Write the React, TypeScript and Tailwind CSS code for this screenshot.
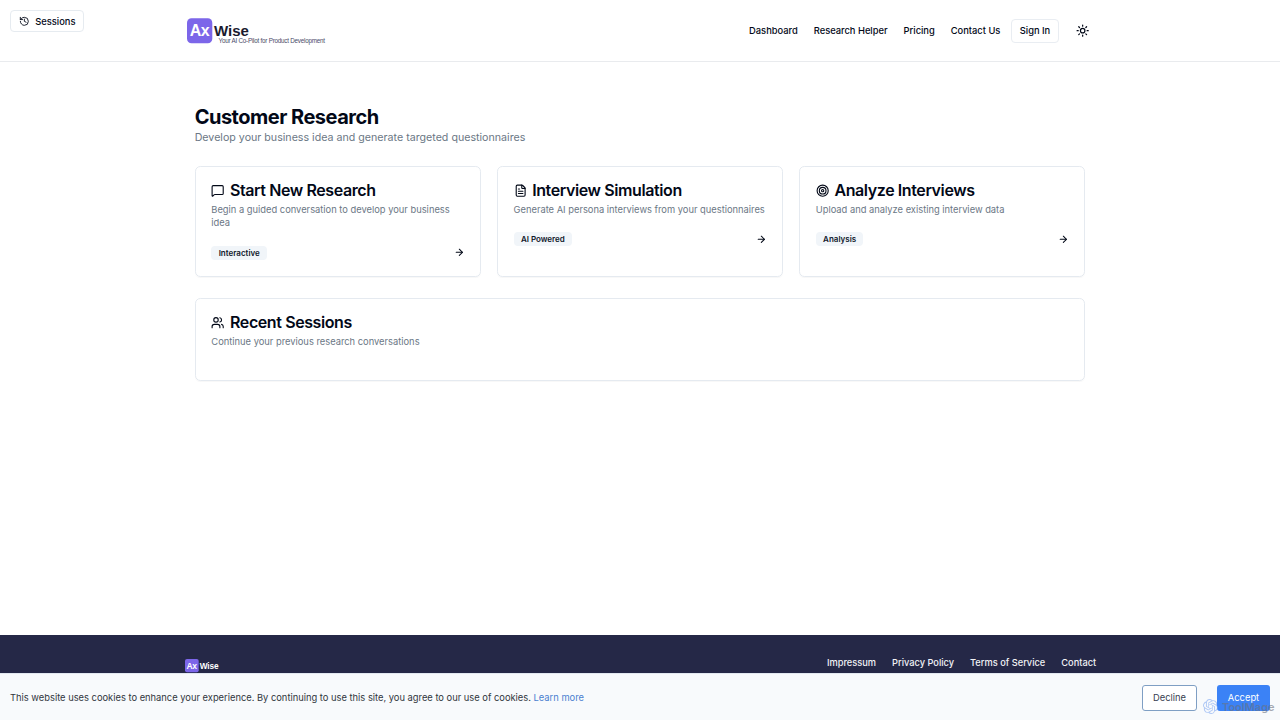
import React from 'react'
import {
  ArrowRight,
  FileText,
  History,
  MessageSquare,
  Sun,
  Target,
  Users,
  type LucideIcon,
} from 'lucide-react'
import { SiOpenai } from 'react-icons/si'

const navLinks = ['Dashboard', 'Research Helper', 'Pricing', 'Contact Us']
const footerLinks = ['Impressum', 'Privacy Policy', 'Terms of Service', 'Contact']

const actions = [
  {
    icon: MessageSquare,
    title: 'Start New Research',
    description: 'Begin a guided conversation to develop your business idea',
    badge: 'Interactive',
  },
  {
    icon: FileText,
    title: 'Interview Simulation',
    description: 'Generate AI persona interviews from your questionnaires',
    badge: 'AI Powered',
  },
  {
    icon: Target,
    title: 'Analyze Interviews',
    description: 'Upload and analyze existing interview data',
    badge: 'Analysis',
  },
]

const Logo: React.FC = () => (
  <svg width="142" height="30" viewBox="0 0 142 30" className="font-['Liberation_Sans',sans-serif]">
    <rect x="0" y="2.3" width="25.3" height="25" rx="4.5" fill="#7c66e9" />
    <text x="2.8" y="20" fontSize="16" fontWeight="700" fill="#fff" textLength="19.8">Ax</text>
    <text x="27" y="20" fontSize="15" fontWeight="700" fill="#1a1a2e" textLength="34.8">Wise</text>
    <text x="31.6" y="27.2" fontSize="6.3" fill="#4a4a68" textLength="106.4">
      Your AI Co-Pilot for Product Development
    </text>
  </svg>
)

const FooterLogo: React.FC = () => (
  <svg width="36" height="14" viewBox="0 0 36 14" className="font-['Liberation_Sans',sans-serif]">
    <rect x="0" y="0" width="13.7" height="13.3" rx="2" fill="#7c66e9" />
    <text x="1.5" y="9.5" fontSize="8.5" fontWeight="700" fill="#fff" textLength="10.5">Ax</text>
    <text x="14.7" y="9.5" fontSize="8.3" fontWeight="700" fill="#fff" textLength="19">Wise</text>
  </svg>
)

const Header: React.FC = () => (
  <header className="h-[62px] shrink-0 border-b border-[#e9ebee]">
    <div className="mx-auto flex h-[61px] w-[906.67px] items-center justify-between">
      <Logo />
      <div className="-mr-[3px] flex items-center">
        <nav className="flex gap-4">
          {navLinks.map((link) => (
            <a key={link} href="#" className="text-[9.333px] leading-[13.33px] font-medium">
              {link}
            </a>
          ))}
        </nav>
        <button className="ml-[10.67px] h-6 w-[48px] rounded-[4px] border border-[#e9edf2] text-[9.333px] font-medium">
          Sign In
        </button>
        <button className="ml-[10.67px] flex size-[26.67px] items-center justify-center">
          <Sun size={13.33} strokeWidth={2.2} />
        </button>
      </div>
    </div>
  </header>
)

interface CardHeadingProps {
  icon: LucideIcon
  title: string
  description: string
}

const CardHeading: React.FC<CardHeadingProps> = ({ icon: Icon, title, description }) => (
  <div>
    <h3 className="flex items-center gap-[5.33px] text-[16px] leading-4 font-semibold tracking-[-0.4px]">
      <Icon size={13.33} />
      {title}
    </h3>
    <p className="mt-[4.67px] text-[9.333px] leading-[13.33px] text-[#6b7785]">{description}</p>
  </div>
)

const CookieBanner: React.FC = () => (
  <div className="flex h-[47px] shrink-0 items-center justify-between border-t border-[#e2e8f0] bg-[#f8fafc] px-[10px] pt-px">
    <p className="pt-px text-[9.333px] leading-[13.33px] text-[#30363d]">
      This website uses cookies to enhance your experience. By continuing to use this site, you agree to our use of
      cookies.{' '}
      <a href="#" className="text-[#4a7fd0]">
        Learn more
      </a>
    </p>
    <div className="flex gap-5">
      <button className="h-[26px] w-[55px] rounded-[3px] border border-[#7f9fc4] bg-white text-[9.333px] text-[#374151]">
        Decline
      </button>
      <button className="h-[26px] w-[53px] rounded-[3px] bg-[#3b82f6] text-[9.333px] text-white">Accept</button>
    </div>
  </div>
)

const Watermark: React.FC = () => (
  <div className="pointer-events-none absolute right-[5px] bottom-[6px] flex items-center gap-[4px] opacity-60">
    <SiOpenai size={15} className="text-[#7fa8f2]" />
    <span className="w-[53px] font-['Inter',sans-serif] text-[11px] leading-[14px] font-semibold text-[#6b7280]">
      ToolMage
    </span>
  </div>
)

const App: React.FC = () => {
  return (
    <div className="relative flex h-screen flex-col overflow-hidden bg-white font-['Inter',sans-serif] text-[#020817]">
      <button className="absolute top-[10px] left-[10px] flex h-[22px] w-[74px] items-center gap-[5.33px] rounded-[4px] border border-[#e6ebf0] pt-px pl-[8.33px] text-[9.333px] font-medium">
        <History size={10.67} />
        Sessions
      </button>

      <Header />

      <main className="mx-auto w-[890.67px] flex-1 pt-[43px]">
        <h1 className="text-[20px] leading-6 font-bold tracking-[-0.5px]">Customer Research</h1>
        <p className="pt-[0.67px] text-[10.667px] leading-4 text-[#6b7785]">
          Develop your business idea and generate targeted questionnaires
        </p>

        <div className="mt-[20.67px] grid grid-cols-3 gap-4">
          {actions.map(({ badge, ...heading }) => (
            <div
              key={badge}
              className="h-[110.67px] rounded-[5.33px] border border-[#e5eaf0] px-[15.67px] pt-[14.9px] shadow-[0_1px_1px_rgba(0,0,0,0.03)]"
            >
              <CardHeading {...heading} />
              <div className="mt-[16px] flex items-center justify-between">
                <span className="rounded-[4px] bg-[#f1f5f9] px-[7.33px] text-[8px] leading-[14px] font-semibold text-[#0f172a]">
                  {badge}
                </span>
                <ArrowRight size={10.67} strokeWidth={2.3} />
              </div>
            </div>
          ))}
        </div>

        <div className="mt-[21.33px] h-[82.67px] rounded-[5.33px] border border-[#e5eaf0] px-[15.67px] pt-[15.2px] shadow-[0_1px_1px_rgba(0,0,0,0.03)]">
          <CardHeading
            icon={Users}
            title="Recent Sessions"
            description="Continue your previous research conversations"
          />
        </div>
      </main>

      <footer className="h-[38.33px] shrink-0 bg-[#252847]">
        <div className="mx-auto flex w-[911px] items-start justify-between pt-[21.33px]">
          <div className="pt-[3px]">
            <FooterLogo />
          </div>
          <div className="-mr-[0.67px] flex gap-4">
            {footerLinks.map((link) => (
              <a key={link} href="#" className="text-[9.25px] leading-[13.33px] font-medium text-[#f1f2f6]">
                {link}
              </a>
            ))}
          </div>
        </div>
      </footer>

      <CookieBanner />
      <Watermark />
    </div>
  )
}

export default App
